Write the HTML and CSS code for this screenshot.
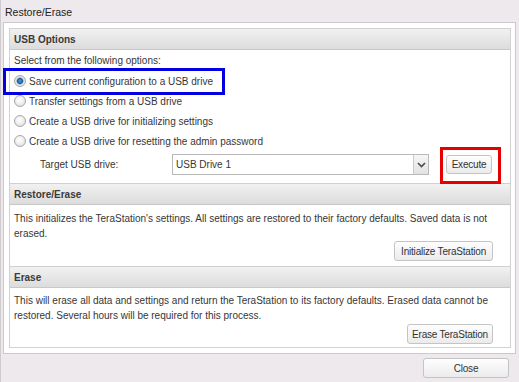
FILE: index.html
```html
<!DOCTYPE html>
<html lang="en">
<head>
    <meta charset="UTF-8">
    <title>Restore/Erase</title>
    <link rel="stylesheet" href="styles.css">
</head>
<body>
    <div class="window">
        <div class="title">Restore/Erase</div>
        <div class="frame">
            <div class="panel">
                <div class="section-head first">USB Options</div>
                <div class="section-body usb">
                    <p class="intro">Select from the following options:</p>
                    <label class="option selected"><input type="radio" name="usb" checked><span>Save current configuration to a USB drive</span></label>
                    <label class="option"><input type="radio" name="usb"><span>Transfer settings from a USB drive</span></label>
                    <label class="option"><input type="radio" name="usb"><span>Create a USB drive for initializing settings</span></label>
                    <label class="option"><input type="radio" name="usb"><span>Create a USB drive for resetting the admin password</span></label>
                    <div class="target-row">
                        <span class="target-label">Target USB drive:</span>
                        <div class="select">
                            <span class="select-value">USB Drive 1</span>
                            <span class="select-arrow">
                                <svg width="9" height="6" viewBox="0 0 9 6"><path d="M1 1 L4.5 4.5 L8 1" fill="none" stroke="#4a4a4a" stroke-width="1.6"/></svg>
                            </span>
                        </div>
                        <button class="btn execute">Execute</button>
                    </div>
                </div>

                <div class="section-head">Restore/Erase</div>
                <div class="section-body middle">
                    <p class="desc">This initializes the TeraStation's settings. All settings are restored to their factory defaults. Saved data is not erased.</p>
                    <div class="actions"><button class="btn">Initialize TeraStation</button></div>
                </div>

                <div class="section-head">Erase</div>
                <div class="section-body last">
                    <p class="desc">This will erase all data and settings and return the TeraStation to its factory defaults. Erased data cannot be restored. Several hours will be required for this process.</p>
                    <div class="actions"><button class="btn wide">Erase TeraStation</button></div>
                </div>
            </div>
        </div>
        <div class="footer">
            <button class="btn close">Close</button>
        </div>
    </div>
</body>
</html>
```

FILE: styles.css
```css
/* Page */
body {
    margin: 0;
    background-color: #eee9ec;
    font-family: "Liberation Sans", Arial, sans-serif;
    font-size: 10px;
    color: #363636;
}

.window {
    width: 518px;
    height: 382px;
    border-left: 1px solid #cfcacd;
}

.title {
    height: 22px;
    line-height: 24px;
    padding-left: 4px;
    font-size: 10.5px;
    color: #222;
}

/* White frame around the panel */
.frame {
    margin-left: 2px;
    width: 502px;
    background-color: #fff;
    border: 1px solid #cdc8cb;
    padding: 5px 4px 5px 5px;
}

.panel {
    border: 1px solid #d2d2d2;
}

/* Section headers */
.section-head {
    height: 20px;
    line-height: 21px;
    padding-left: 4px;
    font-weight: bold;
    color: #3a3a3a;
    background: linear-gradient(#f1f1f1, #dcdcdc);
    border-top: 1px solid #d0d0d0;
    border-bottom: 1px solid #c8c8c8;
}

.section-head.first {
    border-top: none;
}

.section-body {
    padding: 5px 17px 5px 4px;
}

.section-body.usb {
    padding-top: 1px;
    padding-bottom: 8px;
}

.section-body.middle {
    padding-top: 6px;
    padding-bottom: 5px;
}

.section-body.last {
    padding-bottom: 3px;
}

.intro {
    margin: 0;
    line-height: 20px;
}

.option {
    position: relative;
    display: flex;
    align-items: center;
    height: 20px;
}

.option input {
    appearance: none;
    -webkit-appearance: none;
    width: 12px;
    height: 12px;
    margin: 0 3px 0 0;
    border: 1px solid #a8a8a8;
    border-radius: 50%;
    background: radial-gradient(circle at 45% 40%, #fff 0, #f2f2f2 40%, #d6d6d6 100%);
}

.option input:checked {
    background: radial-gradient(circle, #4a9be0 0, #1c5f9e 2.6px, #9fb7cc 3.4px, #eaeaea 4px, #d6d6d6 100%);
}

/* Highlight around the selected option */
.option.selected::after {
    content: "";
    position: absolute;
    left: -11px;
    top: -3px;
    width: 222px;
    height: 27px;
    box-sizing: border-box;
    border: 3px solid #0000e0;
}

/* Target drive row */
.target-row {
    display: flex;
    align-items: center;
    margin-top: 3px;
}

.target-label {
    width: 132px;
    margin-left: 26px;
}

.select {
    display: flex;
    width: 255px;
    height: 19px;
    border: 1px solid #b9b9b9;
    background-color: #fff;
}

.select-value {
    flex: 1;
    line-height: 19px;
    padding-left: 3px;
}

.select-arrow {
    width: 14px;
    display: flex;
    align-items: center;
    justify-content: center;
    border-left: 1px solid #c9c9c9;
    background: linear-gradient(#f6f6f6, #e2e2e2);
}

/* Buttons */
.btn {
    height: 20px;
    padding: 0 6px;
    white-space: nowrap;
    font-family: "Liberation Sans", Arial, sans-serif;
    font-size: 10px;
    letter-spacing: -0.2px;
    color: #333;
    border: 1px solid #c4c4c4;
    border-radius: 3px;
    background: linear-gradient(#fefefe, #ebebeb);
}

.execute {
    position: relative;
    width: 46px;
    height: 19px;
    padding: 0;
    margin-left: 17px;
}

/* Highlight around Execute */
.execute::after {
    content: "";
    position: absolute;
    left: -7px;
    top: -9px;
    width: 61px;
    height: 37px;
    box-sizing: border-box;
    border: 3px solid #e60000;
}

.desc {
    margin: 0;
    line-height: 15px;
    padding-right: 4px;
}

.actions {
    display: flex;
    justify-content: flex-end;
}

.section-body.last .actions {
    margin-top: 1px;
}

.wide {
    width: 86px;
    padding: 0;
}

.footer {
    display: flex;
    justify-content: flex-end;
    padding: 4px 10px 0 0;
}

.close {
    width: 86px;
}
```
